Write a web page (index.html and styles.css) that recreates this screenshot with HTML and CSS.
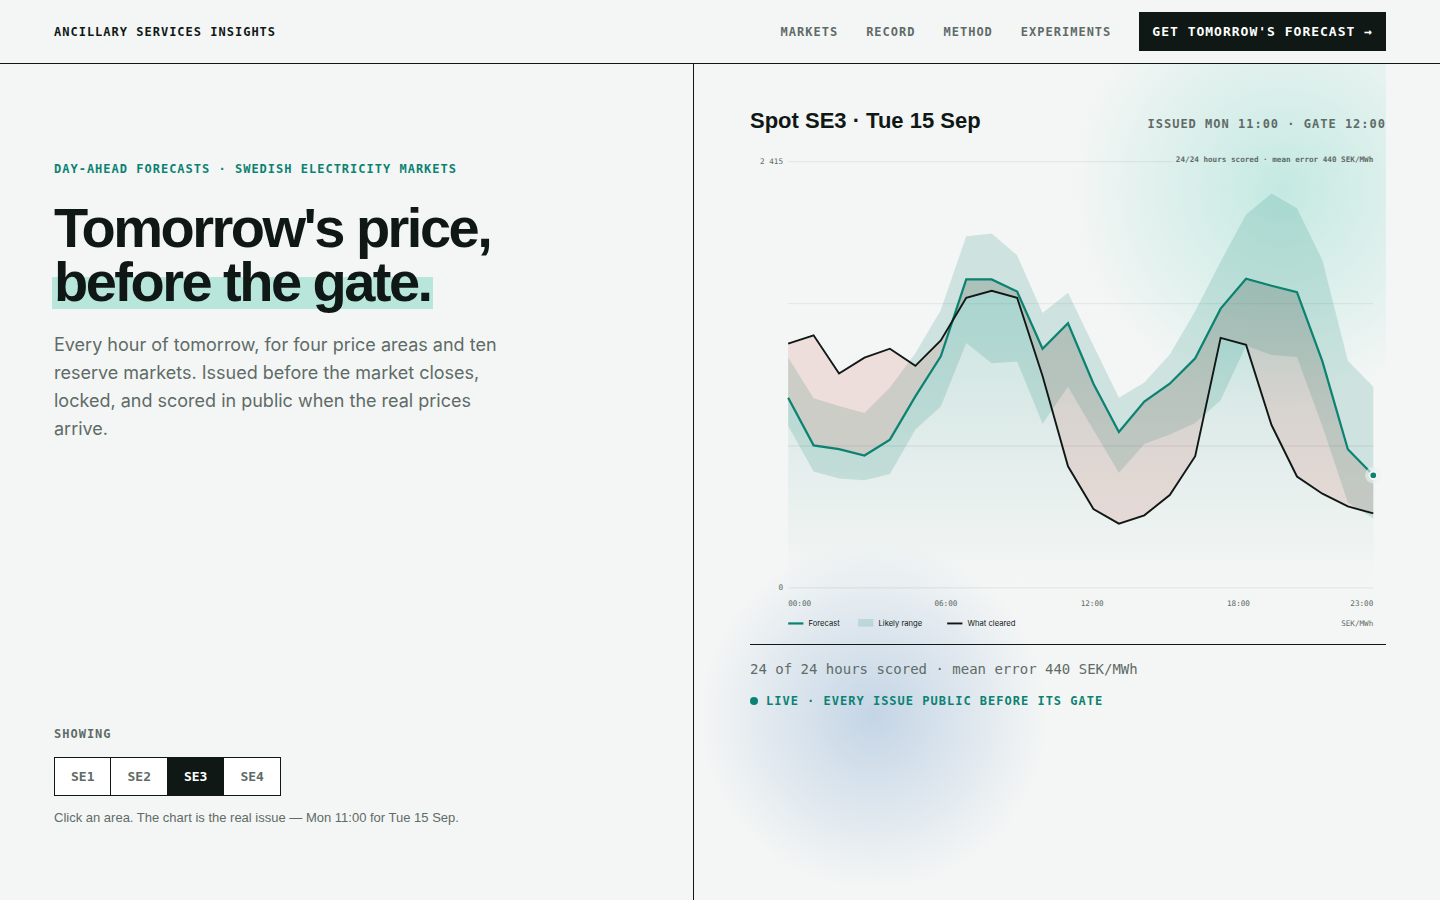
FILE: index.html
```html
<!DOCTYPE html>
<html lang="en">
<head>
<meta charset="utf-8">
<meta name="viewport" content="width=device-width, initial-scale=1">
<title>Ancillary Services Insights</title>
<link rel="stylesheet" href="styles.css">
</head>
<body>
<header class="topbar">
  <a class="brand" href="#">ANCILLARY SERVICES INSIGHTS</a>
  <nav class="nav" aria-label="Main">
    <a href="#">MARKETS</a>
    <a href="#">RECORD</a>
    <a href="#">METHOD</a>
    <a href="#">EXPERIMENTS</a>
    <a class="cta" href="#">GET TOMORROW'S FORECAST →</a>
  </nav>
</header>
<main class="split">
  <section class="intro">
    <div class="pitch">
      <p class="label accent">DAY-AHEAD FORECASTS · SWEDISH ELECTRICITY MARKETS</p>
      <h1 class="headline">Tomorrow's price,<br><span class="mark">before the gate.</span></h1>
      <p class="lead">Every hour of tomorrow, for four price areas and ten reserve markets. Issued before the market closes, locked, and scored in public when the real prices arrive.</p>
    </div>
    <div class="picker">
      <p class="label" id="showing">SHOWING</p>
      <div class="areas" role="group" aria-labelledby="showing">
        <button type="button" class="area">SE1</button>
        <button type="button" class="area">SE2</button>
        <button type="button" class="area active" aria-pressed="true">SE3</button>
        <button type="button" class="area">SE4</button>
      </div>
      <p class="hint">Click an area. The chart is the real issue — Mon 11:00 for Tue 15 Sep.</p>
    </div>
  </section>
  <section class="stage">
    <div class="glow"></div>
    <div class="panel">
      <div class="panel-head">
        <h2 class="panel-title">Spot SE3 · Tue 15 Sep</h2>
        <p class="label">ISSUED MON 11:00 · GATE 12:00</p>
      </div>
      <svg class="chart" viewBox="0 0 1000 780" role="img" aria-label="Spot price forecast for SE3">
        <defs>
          <linearGradient id="fade" x1="0" y1="0" x2="0" y2="1">
            <stop offset="0" stop-color="#14a098" stop-opacity=".2"/>
            <stop offset=".55" stop-color="#0f8271" stop-opacity=".08"/>
            <stop offset="1" stop-color="#0f8271" stop-opacity="0"/>
          </linearGradient>
        </defs>
        <path class="grid" d="M60 31H665M60 254H980M60 478H980M60 701H980"/>
        <path fill="url(#fade)" d="M60 401L100 476 140 482 180 492 220 467 260 399 300 336 340 215 380 215 420 234 460 324 500 284 540 379 580 455 620 407 660 379 700 339 740 261 780 214 820 225 860 235 900 344 940 482 980 523V700H60Z"/>
        <path class="range" d="M60 339L100 403 140 415 180 426 220 386 260 332 300 264 340 148 380 144 420 178 460 269 500 237 540 320 580 402 620 378 660 334 700 266 740 188 780 114 820 81 860 104 900 186 940 344 980 385V592L940 567 900 447 860 338 820 335 780 320 740 406 700 442 660 460 620 475 580 520 540 453 500 385 460 443 420 345 380 348 340 316 300 416 260 452 220 522 180 532 140 529 100 518 60 446Z"/>
        <path class="miss" d="M60 401L100 476 140 482 180 492 220 467 260 399 300 336 340 215 380 215 420 234 460 324 500 284 540 379 580 455 620 407 660 379 700 339 740 261 780 214 820 225 860 235 900 344 940 482 980 523V583L940 572 900 552 860 525 820 444 780 318 740 307 700 493 660 554 620 586 580 599 540 576 500 509 460 367 420 244 380 233 340 244 300 311 260 351 220 324 180 338 140 363 100 303 60 316Z"/>
        <path class="forecast" d="M60 402L100 477 140 483 180 493 220 468 260 400 300 337 340 216 380 216 420 235 460 325 500 285 540 380 580 456 620 408 660 380 700 340 740 262 780 215 820 226 860 236 900 345 940 483 980 524"/>
        <path class="cleared" d="M60 317L100 304 140 364 180 339 220 325 260 352 300 312 340 245 380 234 420 245 460 368 500 510 540 577 580 600 620 587 660 555 700 494 740 308 780 319 820 445 860 526 900 553 940 573 980 584"/>
        <circle class="halo" cx="980" cy="524" r="13"/>
        <circle class="dot" cx="980" cy="524" r="6"/>
        <g class="tick">
          <text x="52" y="34" text-anchor="end">2 415</text>
          <text x="52" y="704" text-anchor="end">0</text>
          <text x="60" y="729">00:00</text>
          <text x="308" y="729" text-anchor="middle">06:00</text>
          <text x="538" y="729" text-anchor="middle">12:00</text>
          <text x="768" y="729" text-anchor="middle">18:00</text>
          <text x="980" y="729" text-anchor="end">23:00</text>
          <text x="980" y="761" text-anchor="end">SEK/MWh</text>
          <text class="score" x="980" y="31" text-anchor="end">24/24 hours scored · mean error 440 SEK/MWh</text>
        </g>
        <path class="forecast" d="M60 757H84"/>
        <rect class="range" x="170" y="750" width="24" height="12"/>
        <path class="cleared" d="M310 757H334"/>
        <g class="key">
          <text x="92" y="761">Forecast</text>
          <text x="202" y="761">Likely range</text>
          <text x="342" y="761">What cleared</text>
        </g>
      </svg>
      <div class="panel-foot">
        <p class="score-line">24 of 24 hours scored · mean error 440 SEK/MWh</p>
        <p class="label accent live"><span class="live-dot"></span>LIVE · EVERY ISSUE PUBLIC BEFORE ITS GATE</p>
      </div>
    </div>
  </section>
</main>
</body>
</html>
```
FILE: styles.css
```css
:root {
  --paper: #f4f6f5;
  --ink: #101816;
  --muted: #5f6b67;
  --accent: #0c8272;
  --mono: "DejaVu Sans Mono", "Liberation Mono", monospace;
  --sans: "Liberation Sans", Arial, sans-serif;
  --text: Inter, "Liberation Sans", sans-serif;
}
* { box-sizing: border-box; }
body {
  margin: 0;
  min-height: 100vh;
  display: flex;
  flex-direction: column;
  background: var(--paper);
  color: var(--ink);
  font-family: var(--sans);
}
h1, h2, p { margin: 0; }
a { color: inherit; text-decoration: none; }

.topbar {
  display: flex;
  align-items: center;
  justify-content: space-between;
  padding: 12px 54px;
  border-bottom: 1px solid var(--ink);
}
.brand, .nav, .label {
  font: bold 12px/18px var(--mono);
  letter-spacing: 1px;
}
.nav {
  display: flex;
  align-items: center;
  gap: 28px;
  color: var(--muted);
}
.cta {
  padding: 10px 13px;
  background: var(--ink);
  color: #fff;
  font-size: 13px;
  line-height: 19px;
}

.split {
  flex: 1;
  display: grid;
  grid-template-columns: 694fr 746fr;
}
.intro {
  display: flex;
  flex-direction: column;
  justify-content: space-between;
  gap: 48px;
  padding: 96px 54px 72px;
  border-right: 1px solid var(--ink);
}
.label { color: var(--muted); }
.label.accent { color: var(--accent); }
.headline {
  margin-top: 23px;
  font-size: 56px;
  line-height: 54px;
  font-weight: bold;
  letter-spacing: -0.045em;
}
.mark {
  display: inline-block;
  margin-left: -2px;
  padding: 0 2px;
  background: linear-gradient(transparent 40%, #b8e6db 40%);
}
.lead {
  max-width: 460px;
  margin-top: 22px;
  color: var(--muted);
  font-family: var(--text);
  font-size: 18px;
  line-height: 28px;
}
.areas {
  display: inline-flex;
  margin-top: 14px;
  border: 1px solid var(--ink);
}
.area {
  padding: 10px 16px;
  border: 0;
  border-left: 1px solid var(--ink);
  background: #fff;
  color: var(--muted);
  font: bold 13px/17px var(--mono);
}
.area:first-child { border-left: 0; }
.area.active { background: var(--ink); color: #fff; }
.hint {
  margin-top: 12px;
  color: var(--muted);
  font-size: 13px;
  line-height: 20px;
}

.stage {
  position: relative;
  padding: 41px 54px 40px 56px;
}
.glow {
  position: absolute;
  inset: 0 54px 0 0;
  background:
    radial-gradient(circle 214px at 85% 15%, #c4e9e2, transparent),
    radial-gradient(circle 174px at 26% 78%, #c4d5e6, transparent);
}
.panel { position: relative; }
.panel-head {
  display: flex;
  align-items: baseline;
  justify-content: space-between;
}
.panel-title {
  font-size: 22px;
  line-height: 32px;
  font-weight: bold;
}
.chart {
  display: block;
  width: 100%;
  margin-top: 5px;
}
.grid { stroke: var(--ink); stroke-opacity: .06; stroke-width: 2; }
.range { fill: #0f8271; fill-opacity: .16; }
.miss { fill: #ba2e1d; fill-opacity: .12; }
.forecast { fill: none; stroke: var(--accent); stroke-width: 3.5; }
.cleared { fill: none; stroke: var(--ink); stroke-width: 3; }
.halo { fill: #e9f3f0; fill-opacity: .6; }
.dot { fill: var(--accent); stroke: var(--paper); stroke-width: 3; }
.tick { fill: var(--muted); font: 12px var(--mono); }
.score { font-weight: bold; }
.key { fill: var(--ink); font: 12px var(--text); }
.panel-foot {
  margin-top: 6px;
  padding-top: 14px;
  border-top: 1px solid var(--ink);
}
.score-line {
  color: var(--muted);
  font: 14px/20px var(--mono);
}
.live {
  display: flex;
  align-items: center;
  gap: 8px;
  margin-top: 13px;
}
.live-dot {
  width: 8px;
  height: 8px;
  border-radius: 50%;
  background: var(--accent);
}
```
